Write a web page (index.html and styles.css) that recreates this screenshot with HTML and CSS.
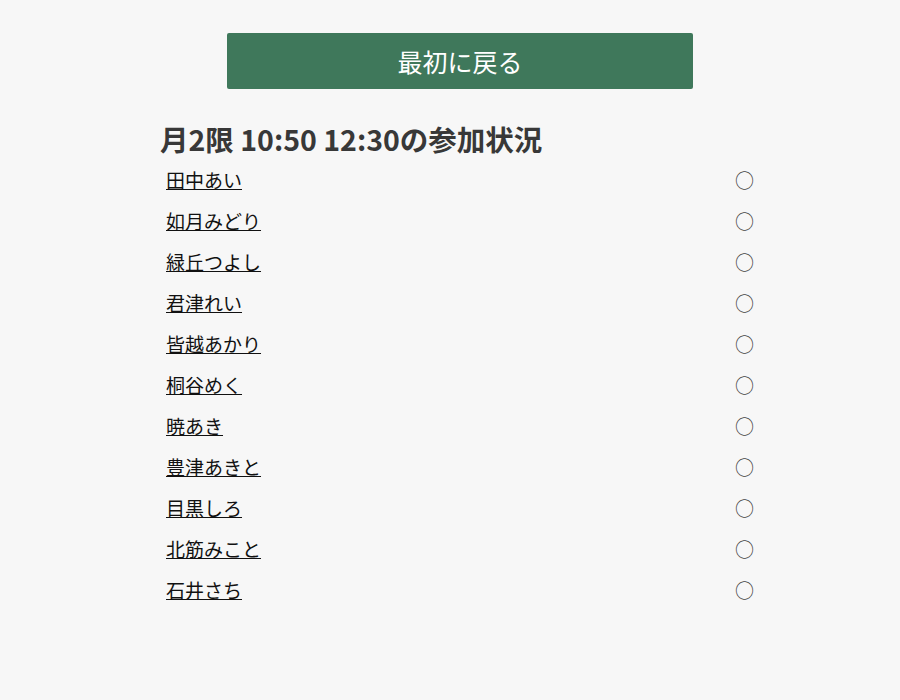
FILE: index.html
```html
<!DOCTYPE html>
<html lang="ja">
<head>
<meta charset="utf-8">
<title>参加状況</title>
<link rel="stylesheet" href="styles.css">
</head>
<body>
<main class="page">
  <div class="top">
    <a class="back-btn" href="#">最初に戻る</a>
  </div>
  <h1 class="title">月2限 10:50 12:30の参加状況</h1>
  <ul class="list">
    <li class="row"><a class="name" href="#">田中あい</a><span class="mark">○</span></li>
    <li class="row"><a class="name" href="#">如月みどり</a><span class="mark">○</span></li>
    <li class="row"><a class="name" href="#">緑丘つよし</a><span class="mark">○</span></li>
    <li class="row"><a class="name" href="#">君津れい</a><span class="mark">○</span></li>
    <li class="row"><a class="name" href="#">皆越あかり</a><span class="mark">○</span></li>
    <li class="row"><a class="name" href="#">桐谷めく</a><span class="mark">○</span></li>
    <li class="row"><a class="name" href="#">暁あき</a><span class="mark">○</span></li>
    <li class="row"><a class="name" href="#">豊津あきと</a><span class="mark">○</span></li>
    <li class="row"><a class="name" href="#">目黒しろ</a><span class="mark">○</span></li>
    <li class="row"><a class="name" href="#">北筋みこと</a><span class="mark">○</span></li>
    <li class="row"><a class="name" href="#">石井さち</a><span class="mark">○</span></li>
  </ul>
</main>
</body>
</html>
```

FILE: styles.css
```css
html, body {
  margin: 0;
  padding: 0;
  background: #f7f7f7;
}
body {
  font-family: "Noto Sans CJK JP", "Noto Sans", sans-serif;
  color: #222;
}
.page {
  width: 600px;
  margin-left: 160px;
  padding-top: 33px;
}
.top {
  display: flex;
  justify-content: center;
}
.back-btn {
  display: block;
  width: 466px;
  height: 56px;
  line-height: 56px;
  background: #3f785b;
  color: #fff;
  text-align: center;
  font-size: 25px;
  text-decoration: none;
  border-radius: 2px;
}
.title {
  margin: 30px 0 0;
  height: 40px;
  line-height: 40px;
  font-size: 28.5px;
  font-weight: 700;
  color: #383838;
}
.list {
  list-style: none;
  margin: 0;
  padding: 0;
}
.row {
  display: flex;
  justify-content: space-between;
  align-items: center;
  height: 41px;
  padding: 0 6px 0 6px;
  font-size: 19px;
}
.name {
  color: #111;
  text-decoration: underline;
}
.mark {
  color: #444;
}
```
